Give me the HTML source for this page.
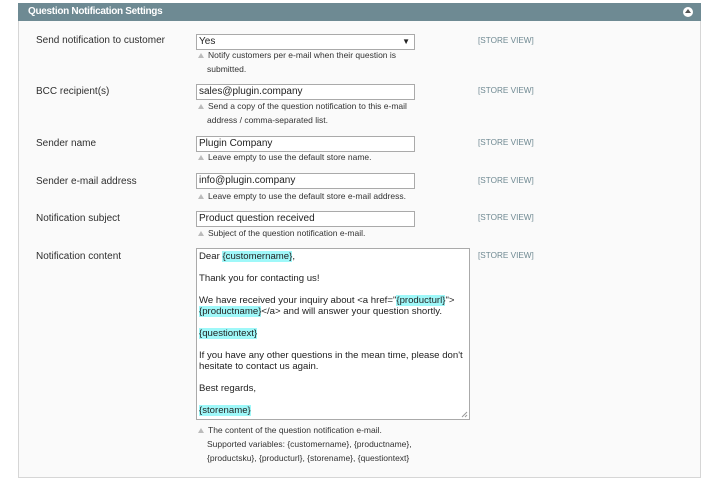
<!DOCTYPE html>
<html><head><style>
body{margin:0;width:720px;height:485px;background:#fff;font-family:"Liberation Sans",Arial,sans-serif;position:relative;overflow:hidden}
.hd{position:absolute;left:18px;top:3px;width:683px;height:18px;background:#6e8a93;color:#fff;font-weight:bold;font-size:10px;line-height:18px}
.hd span{position:absolute;left:10px;letter-spacing:-0.3px}
.hd i{position:absolute;right:8px;top:4px;width:10px;height:10px;border-radius:50%;background:#fff}
.hd i:after{content:"";position:absolute;left:2px;top:2px;border-left:3px solid transparent;border-right:3px solid transparent;border-bottom:4px solid #555}
.pn{position:absolute;left:18px;top:21px;width:681px;height:456px;background:#fafafa;border:1px solid #d6d6d6;border-top:none}
.l{position:absolute;left:36px;font-size:10px;color:#2f2f2f}
.sv{position:absolute;left:478px;font-size:8.2px;color:#6f8992}
.in{position:absolute;left:196px;width:215px;height:14px;border:1px solid #aaa;background:#fff;font-size:10px;line-height:14px;padding-left:2px;color:#222}
.n{position:absolute;left:198px;font-size:8.5px;color:#333;line-height:14px;white-space:nowrap}
.n b{display:inline-block;width:0;height:0;border-left:3px solid transparent;border-right:3px solid transparent;border-bottom:5px solid #bbb;margin-right:4px;vertical-align:0px}
.n.s{left:207px}
.ta{position:absolute;left:196px;top:248px;width:272px;height:170px;border:1px solid #aaa;background:#fff;font-size:9.6px;color:#222;line-height:11px}
.ta div{position:absolute;left:2px;white-space:nowrap}
.h{background:#9ff8f9}
</style></head><body>
<div class="hd"><span>Question Notification Settings</span><i></i></div>
<div class="pn"></div>
<div class="l" style="top:35px">Send notification to customer</div>
<div class="in" style="top:34px">Yes<span style="position:absolute;right:4px;font-size:8px">▼</span></div>
<div class="sv" style="top:36px">[STORE VIEW]</div>
<div class="n" style="top:48px"><b></b>Notify customers per e-mail when their question is</div>
<div class="n s" style="top:62px">submitted.</div>

<div class="l" style="top:86px">BCC recipient(s)</div>
<div class="in" style="top:84px">sales@plugin.company</div>
<div class="sv" style="top:86px">[STORE VIEW]</div>
<div class="n" style="top:99px"><b></b>Send a copy of the question notification to this e-mail</div>
<div class="n s" style="top:113px">address / comma-separated list.</div>

<div class="l" style="top:138px">Sender name</div>
<div class="in" style="top:136px">Plugin Company</div>
<div class="sv" style="top:138px">[STORE VIEW]</div>
<div class="n" style="top:150px"><b></b>Leave empty to use the default store name.</div>

<div class="l" style="top:176px">Sender e-mail address</div>
<div class="in" style="top:173px">info@plugin.company</div>
<div class="sv" style="top:176px">[STORE VIEW]</div>
<div class="n" style="top:189px"><b></b>Leave empty to use the default store e-mail address.</div>

<div class="l" style="top:213px">Notification subject</div>
<div class="in" style="top:211px">Product question received</div>
<div class="sv" style="top:213px">[STORE VIEW]</div>
<div class="n" style="top:226px"><b></b>Subject of the question notification e-mail.</div>

<div class="l" style="top:251px">Notification content</div>
<div class="sv" style="top:251px">[STORE VIEW]</div>
<div class="ta">
<div style="top:2px">Dear <span class="h">{customername}</span>,</div>
<div style="top:24px">Thank you for contacting us!</div>
<div style="top:46px">We have received your inquiry about &lt;a href="<span class="h">{producturl}</span>"&gt;</div>
<div style="top:57px"><span class="h">{productname}</span>&lt;/a&gt; and will answer your question shortly.</div>
<div style="top:79px"><span class="h">{questiontext}</span></div>
<div style="top:101px">If you have any other questions in the mean time, please don't</div>
<div style="top:112px">hesitate to contact us again.</div>
<div style="top:134px">Best regards,</div>
<div style="top:156px"><span class="h">{storename}</span></div>
<svg style="position:absolute;right:1px;bottom:1px" width="7" height="7"><path d="M1 6L6 1M4 6L6 4" stroke="#999" stroke-width="1"/></svg>
</div>
<div class="n" style="top:423px"><b></b>The content of the question notification e-mail.</div>
<div class="n s" style="top:437px">Supported variables: {customername}, {productname},</div>
<div class="n s" style="top:451px">{productsku}, {producturl}, {storename}, {questiontext}</div>
</body></html>
